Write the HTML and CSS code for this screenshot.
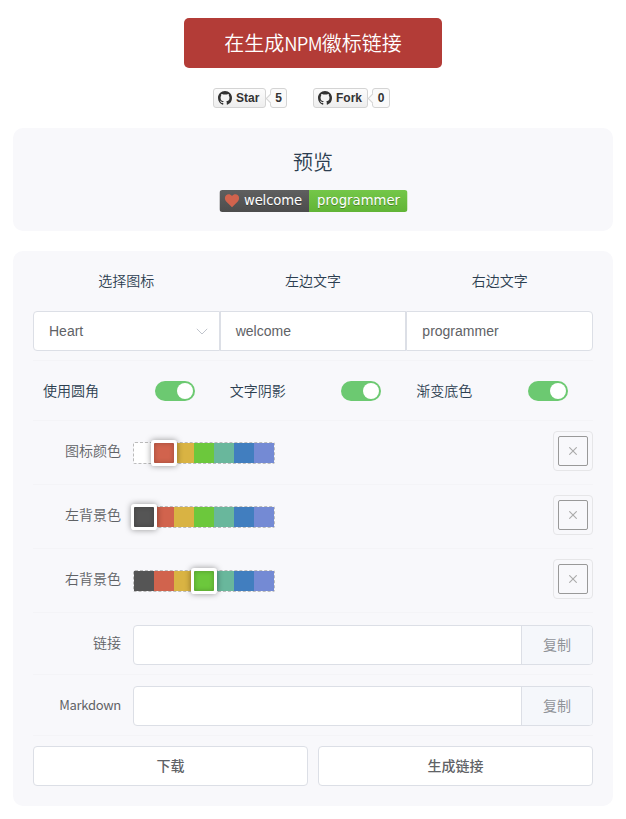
FILE: index.html
```html
<!DOCTYPE html>
<html lang="zh-CN">
<head>
<meta charset="utf-8">
<title>在生成NPM徽标链接</title>
<link rel="stylesheet" href="styles.css">
</head>
<body>
<svg width="0" height="0" class="defs">
  <symbol id="github" viewBox="0 0 16 16"><path d="M8 0C3.58 0 0 3.58 0 8c0 3.54 2.29 6.53 5.47 7.59.4.07.55-.17.55-.38 0-.19-.01-.82-.01-1.49-2.01.37-2.53-.49-2.69-.94-.09-.23-.48-.94-.82-1.13-.28-.15-.68-.52-.01-.53.63-.01 1.08.58 1.23.82.72 1.21 1.87.87 2.33.66.07-.52.28-.87.51-1.07-1.78-.2-3.64-.89-3.64-3.95 0-.87.31-1.59.82-2.15-.08-.2-.36-1.02.08-2.12 0 0 .67-.21 2.2.82.64-.18 1.32-.27 2-.27s1.36.09 2 .27c1.53-1.04 2.2-.82 2.2-.82.44 1.1.16 1.92.08 2.12.51.56.82 1.27.82 2.15 0 3.07-1.87 3.75-3.65 3.95.29.25.54.73.54 1.48 0 1.07-.01 1.93-.01 2.2 0 .21.15.46.55.38A8.01 8.01 0 0 0 16 8c0-4.42-3.58-8-8-8z"/></symbol>
  <symbol id="cross" viewBox="0 0 8 8"><path d="M.3.3l7.4 7.400M7.700.3L.3 7.700" fill="none" stroke="#aaa" stroke-width="1.100"/></symbol>
</svg>
<main class="page">
  <h1 class="title">在生成<span>NPM</span>徽标链接</h1>
  <div class="github">
    <div class="gh star"><span class="gh-btn"><svg><use href="#github"/></svg>Star</span><span class="gh-count">5</span></div>
    <div class="gh fork"><span class="gh-btn"><svg><use href="#github"/></svg>Fork</span><span class="gh-count">0</span></div>
  </div>
  <section class="preview">
    <h2>预览</h2>
    <svg class="badge" width="189" height="22" viewBox="-.5 0 189 22">
      <defs>
        <linearGradient id="shade" x2="0" y2="1"><stop offset="0" stop-color="#bbb" stop-opacity=".1"/><stop offset="1" stop-opacity=".1"/></linearGradient>
        <clipPath id="round"><rect width="188" height="22" rx="3"/></clipPath>
      </defs>
      <g clip-path="url(#round)">
        <path fill="#555" d="M0 0h89.500v22H0z"/><path fill="#6cc83c" d="M89.500 0h98.500v22H89.500z"/><path fill="url(#shade)" d="M0 0h188v22H0z"/>
      </g>
      <path fill="#d1634d" d="M12.500 17.300L6.700 11.400C5 9.600 5 6.700 6.600 5.200 8.300 3.600 11 3.900 12.500 6.100 14 3.900 16.700 3.600 18.400 5.200 20 6.700 20 9.600 18.300 11.400z"/>
      <g class="badge-text">
        <text x="24.500" y="16" fill="#010101" fill-opacity=".3" textLength="58">welcome</text><text x="24.500" y="15" textLength="58">welcome</text>
        <text x="97.500" y="16" fill="#010101" fill-opacity=".3" textLength="83">programmer</text><text x="97.500" y="15" textLength="83">programmer</text>
      </g>
    </svg>
  </section>
  <section class="panel">
    <div class="row heads"><span>选择图标</span><span>左边文字</span><span>右边文字</span></div>
    <div class="row fields">
      <div class="field">Heart<svg class="chevron" viewBox="0 0 12 7"><path d="M.8.8L6 6 11.200.8" fill="none" stroke="#c0c4cc"/></svg></div>
      <div class="field">welcome</div>
      <div class="field">programmer</div>
    </div>
    <div class="row switches">
      <div><span>使用圆角</span><i class="switch"></i></div>
      <div><span>文字阴影</span><i class="switch"></i></div>
      <div><span>渐变底色</span><i class="switch"></i></div>
    </div>
    <div class="row colors">
      <label>图标颜色</label>
      <div class="swatches"><i class="white"></i><i class="red on"></i><i class="gold"></i><i class="green"></i><i class="teal"></i><i class="blue"></i><i class="violet"></i></div>
      <div class="picker"><span><svg><use href="#cross"/></svg></span></div>
    </div>
    <div class="row colors">
      <label>左背景色</label>
      <div class="swatches"><i class="gray on"></i><i class="red"></i><i class="gold"></i><i class="green"></i><i class="teal"></i><i class="blue"></i><i class="violet"></i></div>
      <div class="picker"><span><svg><use href="#cross"/></svg></span></div>
    </div>
    <div class="row colors">
      <label>右背景色</label>
      <div class="swatches"><i class="gray"></i><i class="red"></i><i class="gold"></i><i class="green on"></i><i class="teal"></i><i class="blue"></i><i class="violet"></i></div>
      <div class="picker"><span><svg><use href="#cross"/></svg></span></div>
    </div>
    <div class="row output link"><label>链接</label><div class="copy"><span class="value"></span><span class="append">复制</span></div></div>
    <div class="row output"><label class="latin">Markdown</label><div class="copy"><span class="value"></span><span class="append">复制</span></div></div>
    <div class="actions"><button>下载</button><button>生成链接</button></div>
  </section>
</main>
</body>
</html>
```

FILE: styles.css
```css
* { box-sizing: border-box; }
body {
  margin: 0;
  background: #fff;
  color: #2c3e50;
  font: 14px/20px "Noto Sans CJK SC", sans-serif;
}
.defs { position: absolute; }
.page { width: 600px; margin: 0 0 0 13px; padding-top: 18px; }
.title {
  width: 258px; height: 50px; margin: 0 auto;
  border-radius: 5px;
  background: #b33c37; color: #fff;
  font-size: 20px; font-weight: 350; line-height: 50px;
  text-align: center; white-space: nowrap;
}
.title span { font-size: 18.500px; letter-spacing: -.7px; }
.github {
  display: flex; gap: 26px;
  height: 20px; margin: 20px 0 20px 200px;
  color: #333;
  font: bold 12px/18px "Liberation Sans", sans-serif;
}
.gh { display: flex; gap: 4px; }
.gh-btn, .gh-count { height: 20px; border: 1px solid #d4d4d4; border-radius: 3px; }
.gh-btn {
  display: flex; align-items: center; gap: 4px;
  width: 53px; padding-left: 4px;
  background: linear-gradient(#fcfcfc, #eee);
}
.fork .gh-btn { width: 55px; }
.gh-btn svg { width: 14px; height: 14px; fill: #333; }
.gh-count { position: relative; width: 17px; background: #fafafa; text-align: center; }
.fork .gh-count { width: 18px; }
.gh-count::before {
  content: ""; position: absolute; left: -4px; top: 6px;
  width: 6px; height: 6px;
  border: solid #d4d4d4; border-width: 0 0 1px 1px;
  background: #fafafa; transform: rotate(45deg);
}
.preview, .panel { border-radius: 10px; background: #f8f8fb; }
.preview { height: 103px; padding-top: 20px; text-align: center; }
.preview h2 { margin: 0 0 14px; font-size: 20px; font-weight: 350; line-height: 28px; }
.badge { display: block; margin: 0 0 0 206px; }
.badge-text { font: 13.200px "DejaVu Sans", sans-serif; fill: #fff; }
.panel { height: 555px; margin-top: 20px; padding: 20px; }
.row { display: flex; border-bottom: 1px solid #f4f4f7; }
.heads { height: 40px; border: 0; line-height: 18px; font-weight: 350; }
.heads span { flex: 1; text-align: center; }
.fields { height: 50px; }
.field {
  position: relative; flex: 1; height: 40px; padding-left: 15px;
  border: 1px solid #dcdfe6; background: #fff; color: #606266;
  font: 14px/38px "Liberation Sans", sans-serif;
}
.field:first-child { border-radius: 4px 0 0 4px; }
.field:last-child { border-radius: 0 4px 4px 0; }
.chevron { position: absolute; right: 11px; top: 16px; width: 12px; height: 7px; }
.switches { height: 60px; align-items: center; font-weight: 350; }
.switches div { flex: 1; display: flex; align-items: center; padding: 0 25px 0 10px; justify-content: space-between; }
.switches span { padding-bottom: 2px; }
.switch { width: 40px; height: 20px; padding: 2px; border-radius: 10px; background: #6cc971; }
.switch::after { content: ""; display: block; width: 16px; height: 16px; margin-left: auto; border-radius: 50%; background: #fff; }
.colors { height: 64px; padding-top: 10px; }
.row label { width: 100px; padding-right: 12px; color: #606266; line-height: 38px; text-align: right; font-weight: 350; }
.swatches { display: flex; width: 142px; height: 22px; margin-top: 11px; border: 1px dashed #bbb; border-radius: 2px; }
.swatches i { width: 20px; height: 20px; }
.swatches .on { position: relative; z-index: 1; border-radius: 1px; box-shadow: 0 0 0 3px #fff, 0 0 6px 3px rgba(0,0,0,.4), inset 0 0 5px rgba(0,0,0,.25); }
.white { background: #fff; }
.gray { background: #555; }
.red { background: #d1634d; }
.gold { background: #d9b343; }
.green { background: #6cc83c; }
.teal { background: #69b79c; }
.blue { background: #417ebf; }
.violet { background: #748ad4; }
.picker { width: 40px; height: 40px; margin-left: auto; padding: 4px; border: 1px solid #e6e6e8; border-radius: 4px; }
.picker span { display: flex; align-items: center; justify-content: center; width: 30px; height: 30px; border: 1px solid #999; border-radius: 2px; }
.picker svg { width: 8px; height: 8px; }
.output { height: 61px; padding-top: 11px; }
.link { height: 62px; padding-top: 12px; }
.link label { line-height: 34px; }
.row .latin { font-size: 13px; letter-spacing: -.3px; font-weight: 400; }
.copy { display: flex; flex: 1; height: 40px; border: 1px solid #dcdfe6; border-radius: 4px; overflow: hidden; background: #fff; }
.value { flex: 1; }
.append { width: 71px; border-left: 1px solid #dcdfe6; background: #f5f7fb; color: #909399; line-height: 36px; text-align: center; }
.actions { display: flex; gap: 10px; padding-top: 10px; }
.actions button {
  flex: 1; height: 40px; padding: 0 0 2px;
  border: 1px solid #dcdfe6; border-radius: 4px;
  background: #fff; color: #606266;
  font: 500 14px/36px "Noto Sans CJK SC", sans-serif;
}
```
